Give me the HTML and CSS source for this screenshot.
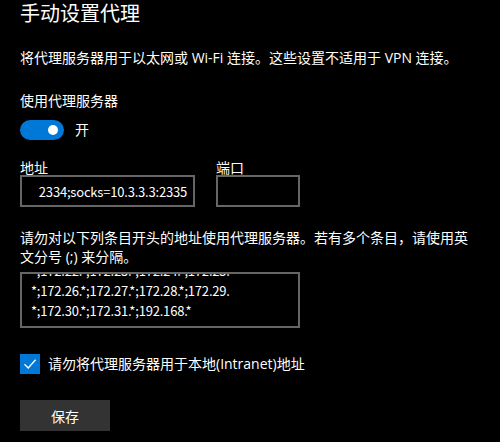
FILE: index.html
```html
<!DOCTYPE html>
<html lang="zh-CN">
<head>
<meta charset="utf-8">
<link rel="stylesheet" href="styles.css">
</head>
<body>
<main class="page">
  <h1 class="title">手动设置代理</h1>
  <p class="desc">将代理服务器用于以太网或 Wi-Fi 连接。这些设置不适用于 VPN 连接。</p>
  <div class="label-use">使用代理服务器</div>
  <div class="toggle-row">
    <span class="toggle"><span class="knob"></span></span>
    <span class="toggle-text">开</span>
  </div>
  <div class="fields">
    <div class="field">
      <div class="field-label">地址</div>
      <div class="input addr"><span class="input-text">2334;socks=10.3.3.3:2335</span></div>
    </div>
    <div class="field">
      <div class="field-label">端口</div>
      <div class="input port"></div>
    </div>
  </div>
  <p class="exceptions">请勿对以下列条目开头的地址使用代理服务器。若有多个条目，请使用英文分号 (;) 来分隔。</p>
  <div class="textarea">
    <div class="textarea-content">*;172.22.*;172.23.*;172.24.*;172.25.<br>*;172.26.*;172.27.*;172.28.*;172.29.<br>*;172.30.*;172.31.*;192.168.*</div>
  </div>
  <label class="check-row">
    <span class="checkbox">
      <svg width="20" height="20" viewBox="0 0 20 20"><path d="M4.5 10.3 L8.2 14 L15.6 5.8" fill="none" stroke="#fff" stroke-width="1.3"/></svg>
    </span>
    <span class="check-text">请勿将代理服务器用于本地(Intranet)地址</span>
  </label>
  <div class="button">保存</div>
</main>
</body>
</html>
```

FILE: styles.css
```css
html, body {
  margin: 0;
  padding: 0;
  background: #000;
}
body {
  color: #fff;
  font-family: "Open Sans", "Noto Sans CJK SC", sans-serif;
  font-size: 14px;
  width: 500px;
  height: 442px;
  overflow: hidden;
}
.page {
  padding: 0 20px;
  display: flex;
  flex-direction: column;
  align-items: flex-start;
}
.title {
  margin: 0;
  font-size: 20px;
  font-weight: normal;
  line-height: 28px;
}
.desc {
  margin: 20px 0 0;
  line-height: 20px;
}
.label-use {
  margin-top: 23px;
  line-height: 20px;
}
.toggle-row {
  margin-top: 9px;
  display: flex;
  align-items: center;
  gap: 11px;
}
.toggle {
  width: 44px;
  height: 20px;
  border-radius: 10px;
  background: #0078d7;
  display: flex;
  align-items: center;
  justify-content: flex-end;
  padding-right: 6px;
  box-sizing: border-box;
}
.knob {
  width: 10px;
  height: 10px;
  border-radius: 50%;
  background: #fff;
}
.toggle-text {
  line-height: 20px;
}
.fields {
  margin-top: 21px;
  display: flex;
  gap: 21px;
}
.field-label {
  line-height: 14px;
}
.input {
  box-sizing: border-box;
  height: 32px;
  border: 2px solid #666;
  background: #000;
  display: flex;
  align-items: center;
  overflow: hidden;
}
.addr {
  width: 175px;
  justify-content: flex-end;
  padding-right: 6px;
}
.port {
  width: 84px;
}
.input-text,
.textarea-content {
  font-family: "Noto Sans CJK SC", sans-serif;
  font-size: 13px;
  letter-spacing: -0.2px;
  white-space: nowrap;
}
.exceptions {
  margin: 21px 0 0;
  width: 460px;
  line-height: 19px;
}
.textarea {
  margin-top: 6px;
  box-sizing: border-box;
  width: 280px;
  height: 56px;
  border: 2px solid #666;
  overflow: hidden;
  padding-left: 9px;
}
.textarea-content {
  margin-top: -13px;
  line-height: 20px;
}
.check-row {
  margin-top: 26px;
  display: flex;
  align-items: center;
  gap: 8px;
}
.checkbox {
  width: 20px;
  height: 20px;
  background: #0078d7;
  display: block;
}
.checkbox svg {
  display: block;
}
.check-text {
  line-height: 20px;
}
.button {
  margin-top: 26px;
  width: 90px;
  height: 31px;
  background: #333;
  display: flex;
  align-items: center;
  justify-content: center;
}
```
